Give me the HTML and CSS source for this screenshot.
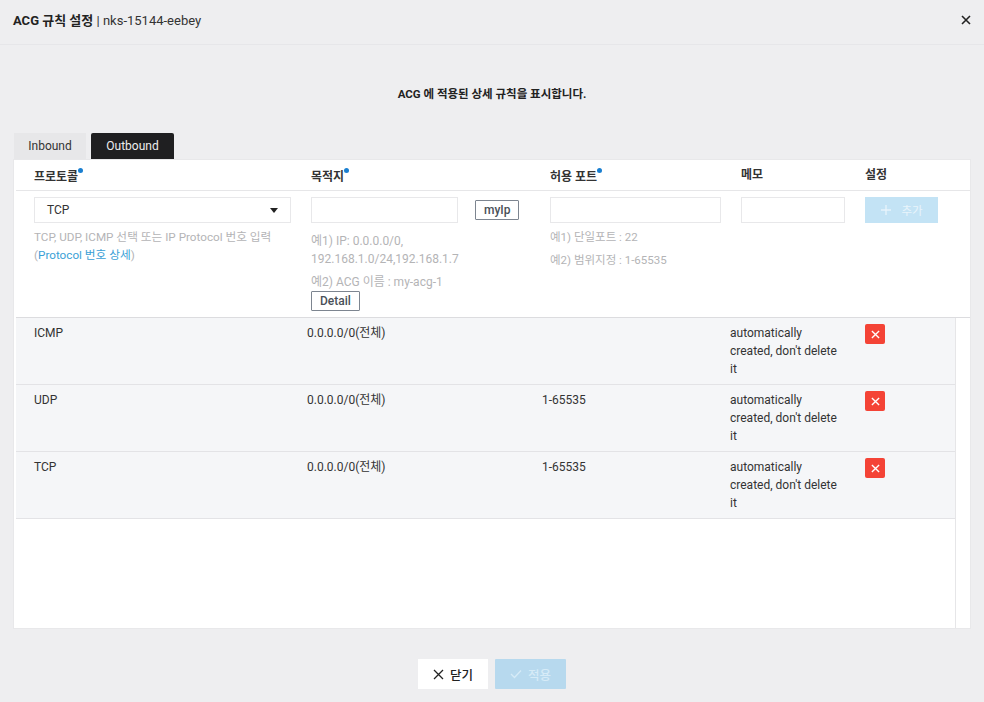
FILE: index.html
```html
<!DOCTYPE html>
<html lang="ko">
  <head>
    <meta charset="UTF-8" />
    <title>ACG 규칙 설정</title>
    <link rel="stylesheet" href="styles.css">
  </head>
  <body>
    <div class="modal">
      <div class="modal-head">
        <div class="modal-title"><b>ACG 규칙 설정</b> | nks-15144-eebey</div>
        <svg class="close-icon" width="10" height="10" viewBox="0 0 10 10"><path d="M1 1L9 9M9 1L1 9" /></svg>
      </div>
      <div class="intro">ACG 에 적용된 상세 규칙을 표시합니다.</div>
      <div class="tabs">
        <a class="tab">Inbound</a>
        <a class="tab active">Outbound</a>
      </div>
      <div class="panel">
        <div class="cols head-row">
          <div>프로토콜<i class="dot"></i></div>
          <div>목적지<i class="dot"></i></div>
          <div>허용 포트<i class="dot"></i></div>
          <div>메모</div>
          <div>설정</div>
        </div>
        <div class="cols form-row">
          <div>
            <div class="field select">TCP<span class="caret"></span></div>
            <div class="hint hint-proto">TCP, UDP, ICMP 선택 또는 IP Protocol 번호 입력<br />(<a>Protocol 번호 상세</a>)</div>
          </div>
          <div>
            <div class="field-line">
              <div class="field dest-field"></div>
              <a class="btn-line">myIp</a>
            </div>
            <div class="hint hint-dest">예1) IP: 0.0.0.0/0,<br />192.168.1.0/24,192.168.1.7</div>
            <div class="hint hint-next">예2) ACG 이름 : my-acg-1</div>
            <a class="btn-line">Detail</a>
          </div>
          <div class="port-col">
            <div class="field port-field"></div>
            <div class="hint hint-port">예1) 단일포트 : 22</div>
            <div class="hint hint-next">예2) 범위지정 : 1-65535</div>
          </div>
          <div><div class="field memo-field"></div></div>
          <div>
            <a class="btn-add">
              <svg width="12" height="12" viewBox="0 0 12 12"><path d="M6 1V11M1 6H11" /></svg>
              추가
            </a>
          </div>
        </div>
        <div class="rules">
          <div class="rule">
            <div>ICMP</div>
            <div>0.0.0.0/0(전체)</div>
            <div></div>
            <div>automatically created, don't delete it</div>
            <div><a class="btn-del"><svg width="9" height="9" viewBox="0 0 10 10"><path d="M1 1L9 9M9 1L1 9" /></svg></a></div>
          </div>
          <div class="rule">
            <div>UDP</div>
            <div>0.0.0.0/0(전체)</div>
            <div>1-65535</div>
            <div>automatically created, don't delete it</div>
            <div><a class="btn-del"><svg width="9" height="9" viewBox="0 0 10 10"><path d="M1 1L9 9M9 1L1 9" /></svg></a></div>
          </div>
          <div class="rule">
            <div>TCP</div>
            <div>0.0.0.0/0(전체)</div>
            <div>1-65535</div>
            <div>automatically created, don't delete it</div>
            <div><a class="btn-del"><svg width="9" height="9" viewBox="0 0 10 10"><path d="M1 1L9 9M9 1L1 9" /></svg></a></div>
          </div>
        </div>
      </div>
      <div class="actions">
        <a class="btn-close">
          <svg width="11" height="11" viewBox="0 0 11 11"><path d="M1 1L10 10M10 1L1 10" /></svg>
          닫기
        </a>
        <a class="btn-apply">
          <svg width="12" height="10" viewBox="0 0 12 10"><path d="M1 5L4.5 8.5L11 1.5" /></svg>
          적용
        </a>
      </div>
    </div>
  </body>
</html>
```

FILE: styles.css
```css
html,
body {
  margin: 0;
  padding: 0;
  height: 100%;
}
body {
  background: #eeeef0;
  color: #222;
  font-family: Roboto, 'Noto Sans CJK KR', sans-serif;
  font-size: 12px;
  overflow: hidden;
}
a {
  cursor: pointer;
  text-decoration: none;
}
svg {
  fill: none;
  stroke: currentColor;
  stroke-width: 1.3;
}
.modal {
  height: 702px;
  display: flex;
  flex-direction: column;
}
.modal-head {
  height: 45px;
  box-sizing: border-box;
  padding: 0 13px;
  display: flex;
  align-items: center;
  justify-content: space-between;
  border-bottom: 1px solid #e6e6e9;
}
.modal-title {
  font-size: 13px;
  margin-top: -6px;
  color: #333;
}
.modal-title b {
  font-size: 13px;
  color: #222;
  font-weight: 700;
}
.close-icon {
  color: #222;
  stroke-width: 1.6;
  margin: -5px 0 0;
}
.intro {
  height: 88px;
  box-sizing: border-box;
  padding-top: 41px;
  text-align: center;
  font-size: 11.5px;
  font-weight: 700;
  line-height: 16px;
}
.tabs {
  display: flex;
  gap: 5px;
  padding-left: 14px;
  height: 27px;
}
.tab {
  width: 72px;
  height: 26px;
  line-height: 26px;
  text-align: center;
  background: #e7e7e9;
  color: #333;
  font-size: 12px;
}
.tab.active {
  width: 83px;
  background: #1f1f21;
  color: #eee;
  border-radius: 2px 2px 0 0;
}
.panel {
  margin: 0 14px;
  height: 468px;
  box-sizing: border-box;
  background: #fff;
  border-left: 2px solid #fff;
  box-shadow: 0 0 0 1px #e8e8ea;
  display: flex;
  flex-direction: column;
}
.cols {
  display: grid;
  grid-template-columns: 277px 239px 191px 124px 1fr;
  padding-left: 18px;
}
.head-row {
  height: 31px;
  box-sizing: border-box;
  padding-top: 8px;
  border-bottom: 1px solid #e6e6e8;
  font-weight: 700;
  font-size: 12px;
  line-height: 14px;
  color: #333;
}
.dot {
  display: inline-block;
  width: 5px;
  height: 5px;
  border-radius: 50%;
  background: #1a7fd0;
  margin-left: 0;
  vertical-align: 8px;
}
.form-row {
  height: 127px;
  box-sizing: border-box;
  padding-top: 6px;
  border-bottom: 1px solid #dcdcdf;
}
.field {
  height: 26px;
  box-sizing: border-box;
  border: 1px solid #e8e8ea;
  background: #fff;
}
.select {
  width: 257px;
  padding-left: 12px;
  line-height: 24px;
  position: relative;
  color: #333;
}
.caret {
  position: absolute;
  right: 12px;
  top: 10px;
  border: 4px solid transparent;
  border-top: 5px solid #222;
  border-bottom: 0;
}
.field-line {
  display: flex;
  align-items: center;
  gap: 17px;
}
.dest-field {
  width: 147px;
}
.port-field {
  width: 171px;
}
.memo-field {
  width: 104px;
}
.btn-line {
  display: inline-block;
  height: 20px;
  line-height: 18px;
  box-sizing: border-box;
  padding: 0 8px;
  border: 1px solid #7d8590;
  border-radius: 1px;
  font-size: 12px;
  font-weight: 500;
  color: #4a5058;
}
.hint {
  color: #b4b4b6;
  font-size: 12px;
  line-height: 18px;
}
.hint a {
  color: #3a9fd6;
}
.hint-proto {
  margin-top: 5px;
  font-size: 11.7px;
}
.port-col .hint {
  font-size: 11.5px;
}
.hint-dest {
  margin-top: 9px;
}
.hint-port {
  margin-top: 5px;
}
.hint-next {
  margin-top: 5px;
}
.btn-add {
  display: flex;
  align-items: center;
  justify-content: center;
  gap: 9px;
  width: 73px;
  height: 26px;
  background: #c3e3f5;
  color: #e8f4fb;
  font-size: 11.5px;
}
.rules {
  flex: 1;
  border-right: 1px solid #e6e6e8;
  margin-right: 14px;
}
.rule {
  display: grid;
  grid-template-columns: 273px 235px 188px 135px 1fr;
  height: 67px;
  box-sizing: border-box;
  padding: 6px 0 0 18px;
  line-height: 18px;
  background: #f5f6f8;
  border-bottom: 1px solid #e3e3e6;
  color: #333;
}
.rule > div:nth-child(4) {
  width: 112px;
}
.btn-del {
  display: flex;
  align-items: center;
  justify-content: center;
  width: 20px;
  height: 20px;
  background: #f44336;
  border-radius: 2px;
  color: #fff;
}
.btn-del svg {
  stroke-width: 1.5;
}
.actions {
  flex: 1;
  display: flex;
  justify-content: center;
  gap: 7px;
  padding-top: 31px;
}
.btn-close,
.btn-apply {
  display: flex;
  align-items: center;
  justify-content: center;
  gap: 6px;
  height: 30px;
  font-size: 12.5px;
  font-weight: 500;
}
.btn-close {
  width: 70px;
  background: #fff;
  color: #222;
}
.btn-apply {
  width: 71px;
  background: #b7d9ee;
  color: #d6ebf7;
  border-radius: 1px;
}
```
